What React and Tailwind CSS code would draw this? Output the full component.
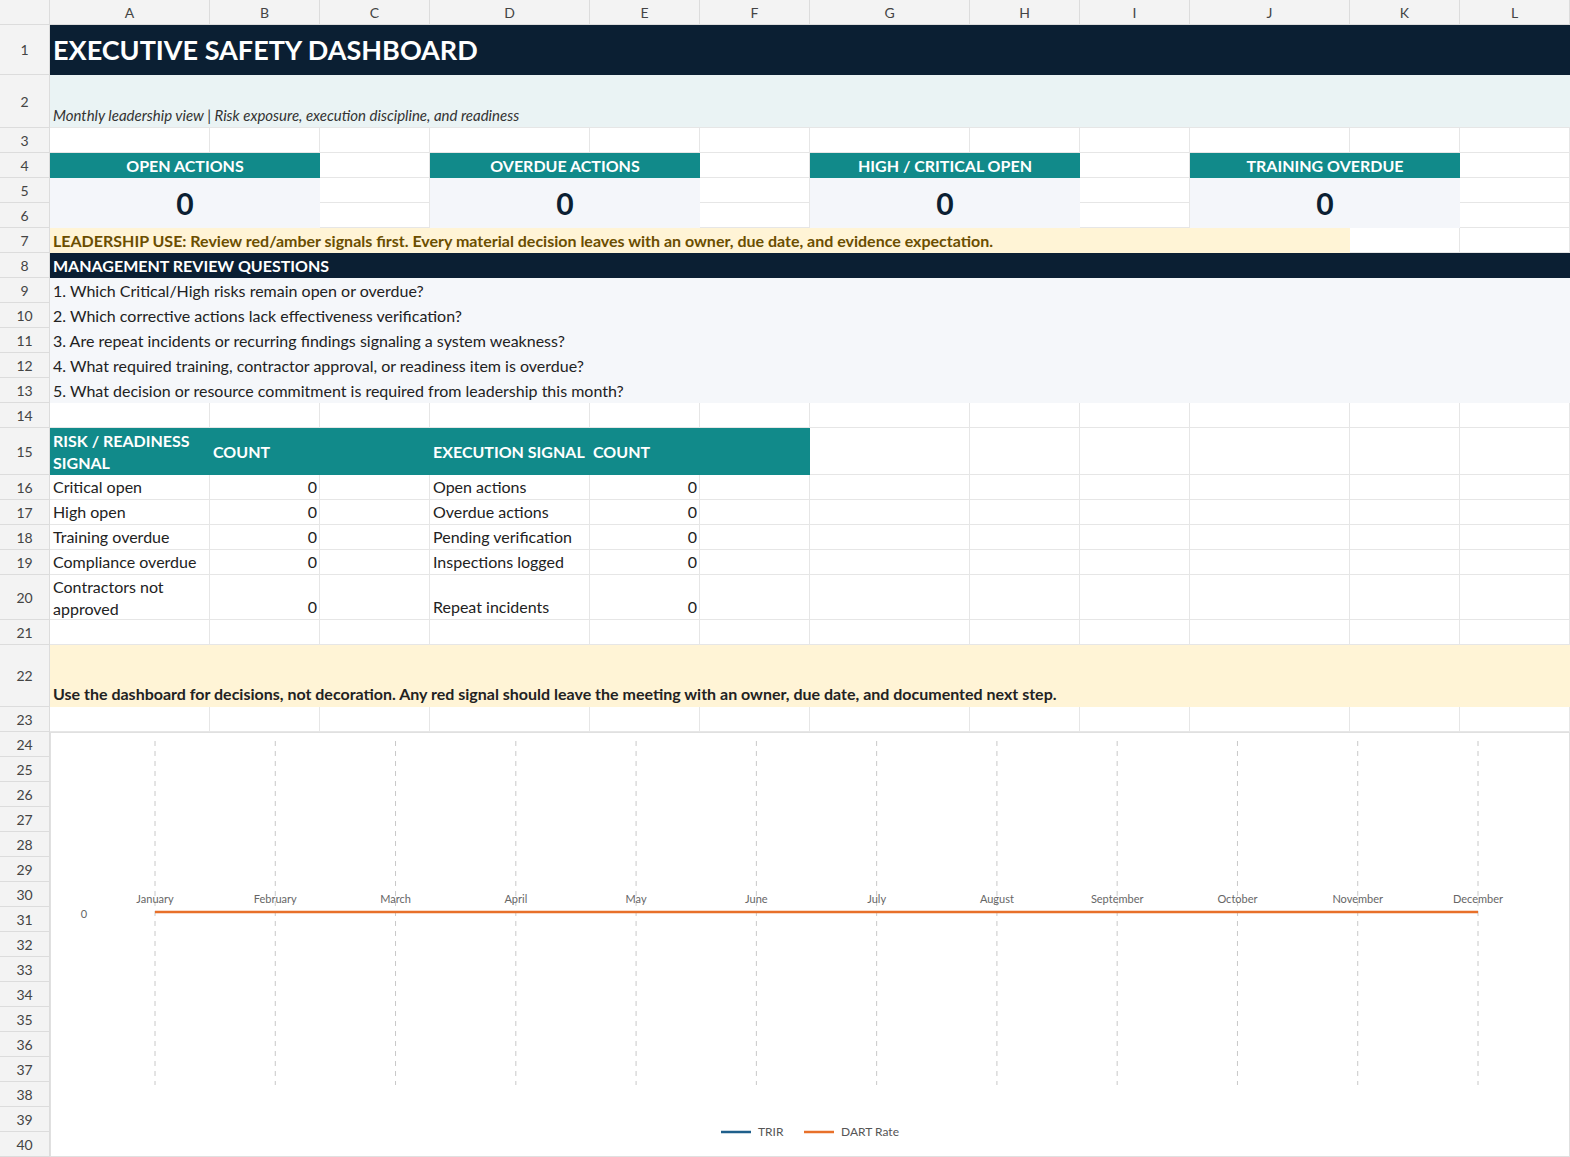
import React from "react";

const colW = [50,160,110,110,160,110,110,160,110,110,160,110,110];
const rowH = [25,50,53,25,25,25,25,25,25,25,25,25,25,25,25,47,25,25,25,25,45,25,62,25,...Array(17).fill(25)];
const letters = ["A","B","C","D","E","F","G","H","I","J","K","L"];

function C({ r, c, r2, c2, className = "", children }) {
  return (
    <div
      className={className}
      style={{ gridRow: `${r + 2} / ${(r2 ?? r) + 3}`, gridColumn: `${c + 2} / ${(c2 ?? c) + 3}` }}
    >
      {children}
    </div>
  );
}

const months = ["January","February","March","April","May","June","July","August","September","October","November","December"];

export default function App() {
  const cells = [];
  for (let r = 0; r < rowH.length; r++) {
    for (let c = 0; c < colW.length; c++) {
      const key = `${r}-${c}`;
      const style = { gridRow: r + 1, gridColumn: c + 1 };
      if (r === 0 || c === 0) {
        cells.push(
          <div key={key} style={style} className="bg-[#f3f3f3] border-r border-b border-[#dcdcdc] flex items-center justify-center text-[14px] text-[#444] font-['Liberation_Sans',sans-serif]">
            {r === 0 ? (c === 0 ? "" : letters[c - 1]) : r}
          </div>
        );
      } else {
        cells.push(<div key={key} style={style} className="bg-white border-r border-b border-[#e6e6e6]" />);
      }
    }
  }
  const teal = "bg-[#118a8a] text-white font-bold text-[16px]";
  const card = (c, label) => (
    <React.Fragment key={c}>
      <C r={3} c={c} c2={c + 1} className={`${teal} flex items-center justify-center`}>{label}</C>
      <C r={4} r2={5} c={c} c2={c + 1} className="bg-[#f4f6fa] flex items-center justify-center text-[30px] font-bold text-[#0b1f33]">0</C>
    </React.Fragment>
  );
  const left = ["Critical open","High open","Training overdue","Compliance overdue","Contractors not approved"];
  const right = ["Open actions","Overdue actions","Pending verification","Inspections logged","Repeat incidents"];
  const step = (1477 - 154) / 11;
  return (
    <div className="font-[Lato,sans-serif] text-[#222] w-[1570px] h-[1157px] overflow-hidden">
      <div className="grid grid-cols-[50px_160px_110px_110px_160px_110px_110px_160px_110px_110px_160px_110px_110px] grid-rows-[25px_50px_53px_25px_25px_25px_25px_25px_25px_25px_25px_25px_25px_25px_25px_47px_25px_25px_25px_25px_45px_25px_62px_25px_repeat(17,25px)]">
        {cells}
        <C r={0} c={0} c2={11} className="bg-[#0b1f33] text-white font-bold text-[27px] flex items-center px-[3px]">EXECUTIVE SAFETY DASHBOARD</C>
        <C r={1} c={0} c2={11} className="bg-[#eaf3f4] italic text-[15px] text-[#333] flex items-end px-[3px] pb-[1px] border-b border-[#e6e6e6]">Monthly leadership view | Risk exposure, execution discipline, and readiness</C>
        {card(0, "OPEN ACTIONS")}
        {card(3, "OVERDUE ACTIONS")}
        {card(6, "HIGH / CRITICAL OPEN")}
        {card(9, "TRAINING OVERDUE")}
        <C r={6} c={0} c2={9} className="bg-[#fff4d6] text-[#6b4e00] font-bold text-[16px] flex items-center px-[3px] whitespace-nowrap">LEADERSHIP USE: Review red/amber signals first. Every material decision leaves with an owner, due date, and evidence expectation.</C>
        <C r={7} c={0} c2={11} className="bg-[#0b1f33] text-white font-bold text-[16px] flex items-center px-[3px]">MANAGEMENT REVIEW QUESTIONS</C>
        {["1. Which Critical/High risks remain open or overdue?","2. Which corrective actions lack effectiveness verification?","3. Are repeat incidents or recurring findings signaling a system weakness?","4. What required training, contractor approval, or readiness item is overdue?","5. What decision or resource commitment is required from leadership this month?"].map((q, i) => (
          <C key={q} r={8 + i} c={0} c2={11} className="bg-[#f5f7fa] text-[16px] flex items-center px-[3px] whitespace-nowrap">{q}</C>
        ))}
        <C r={14} c={0} c2={5} className="bg-[#118a8a]" />
        <C r={14} c={0} className="text-white font-bold text-[16px] leading-[22px] flex items-center px-[3px]">RISK / READINESS SIGNAL</C>
        <C r={14} c={1} className="text-white font-bold text-[16px] flex items-center px-[3px]">COUNT</C>
        <C r={14} c={3} className="text-white font-bold text-[16px] flex items-center px-[3px] whitespace-nowrap">EXECUTION SIGNAL</C>
        <C r={14} c={4} className="text-white font-bold text-[16px] flex items-center px-[3px]">COUNT</C>
        {left.map((l, i) => (
          <React.Fragment key={i}>
            <C r={15 + i} c={0} className={`text-[16px] px-[3px] flex ${i === 4 ? "items-end leading-[22px]" : "items-end pb-[1px] whitespace-nowrap"}`}>{l}</C>
            <C r={15 + i} c={1} className="text-[16px] px-[3px] flex items-end justify-end pb-[1px]">0</C>
            <C r={15 + i} c={3} className="text-[16px] px-[3px] flex items-end pb-[1px] whitespace-nowrap">{right[i]}</C>
            <C r={15 + i} c={4} className="text-[16px] px-[3px] flex items-end justify-end pb-[1px]">0</C>
          </React.Fragment>
        ))}
        <C r={21} c={0} c2={11} className="bg-[#fff4d6] font-bold text-[16px] flex items-end px-[3px] pb-[1px] whitespace-nowrap">Use the dashboard for decisions, not decoration. Any red signal should leave the meeting with an owner, due date, and documented next step.</C>
        <C r={23} r2={39} c={0} c2={11} className="bg-white border border-[#e0e0e0]">
          <svg width="1520" height="425" className="block">
            {months.map((m, i) => {
              const x = 154 - 50 + i * step;
              return (
                <g key={m}>
                  <line x1={x} x2={x} y1={8} y2={352} stroke="#c8c8c8" strokeDasharray="5 5" />
                  <text x={x} y={170} textAnchor="middle" fontSize="11" fill="#666" fontFamily="Lato, sans-serif">{m}</text>
                </g>
              );
            })}
            <line x1={104} x2={1427} y1={179} y2={179} stroke="#e8702a" strokeWidth="2.5" />
            <text x={33} y={185} textAnchor="middle" fontSize="11" fill="#666" fontFamily="Lato, sans-serif">0</text>
            <line x1={670} x2={700} y1={399} y2={399} stroke="#1f5f8b" strokeWidth="2.5" />
            <text x={707} y={403} fontSize="12" fill="#555" fontFamily="Lato, sans-serif">TRIR</text>
            <line x1={753} x2={783} y1={399} y2={399} stroke="#e8702a" strokeWidth="2.5" />
            <text x={790} y={403} fontSize="12" fill="#555" fontFamily="Lato, sans-serif">DART Rate</text>
          </svg>
        </C>
      </div>
    </div>
  );
}
